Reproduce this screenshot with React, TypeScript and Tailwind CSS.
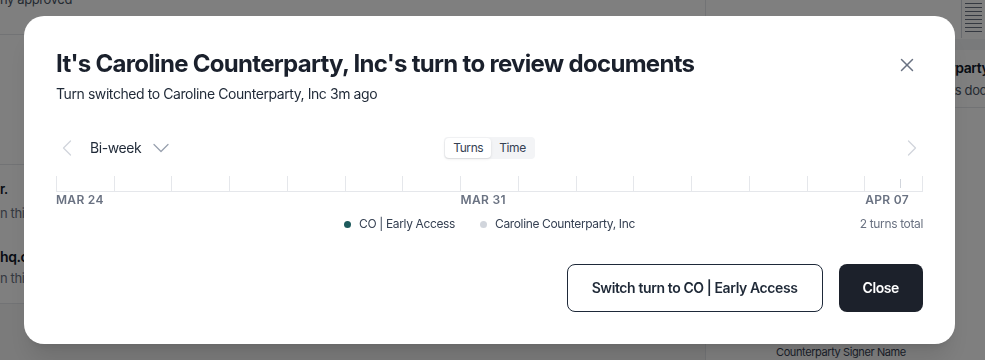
import { ChevronDown, ChevronLeft, ChevronRight, X } from "lucide-react";

// 15 day intervals on the bi-week strip, labels on every 7th tick
const days = Array.from({ length: 15 }, (_, i) => i);

const Backdrop = () => {
  return (
    <div className="flex h-[360px] w-full">
      {/* main column behind the dialog */}
      <main className="flex w-[705px] shrink-0 flex-col bg-[#f7f7f7]">
        <div className="h-[35px] border-b border-gray-200 bg-white">
          <p className="-mt-[10px] text-[13px] text-gray-600">ny approved</p>
        </div>
        <div className="h-[130px] border-b border-gray-200 bg-white" />
        <div className="flex h-[139px] flex-col border-b border-gray-200 bg-white pt-[15px]">
          <p className="text-[13px] font-semibold text-gray-900">r.</p>
          <p className="mt-[4px] text-[13px] text-gray-500">n this</p>
          <p className="mt-[23px] text-[14px] font-semibold text-gray-900">hq.com</p>
          <p className="mt-[2px] text-[13px] text-gray-500">n this</p>
        </div>
      </main>

      {/* right side panel */}
      <aside className="flex min-w-0 flex-1 flex-col overflow-hidden border-l border-gray-200 bg-white">
        <div className="flex h-[45px] justify-end">
          <div className="flex h-[38px] w-[24px] flex-col gap-[3px] border-l border-gray-300 px-[3px] pt-[3px]">
            {Array.from({ length: 8 }, (_, i) => (
              <div key={i} className="h-px bg-gray-500" />
            ))}
          </div>
        </div>
        <div className="h-[12px] bg-gray-100" />
        <div className="border-b border-gray-200 pb-[6px] pt-[7px]">
          <p className="whitespace-nowrap pl-[141px] text-[14px] font-semibold text-gray-900">Caroline Counterparty</p>
          <p className="mt-[3px] whitespace-nowrap pl-[180px] text-[13px] text-gray-600">Reviewing its documents</p>
        </div>
        <p className="ml-[70px] mt-[236px] whitespace-nowrap text-[11px] text-gray-700">Counterparty Signer Name</p>
      </aside>
    </div>
  );
};

export default function App() {
  return (
    <div className="relative h-[360px] w-full overflow-hidden font-['Inter','Liberation_Sans',sans-serif] tracking-[-0.025em]">
      <Backdrop />

      {/* overlay */}
      <div className="fixed inset-0 bg-black/50" />

      {/* dialog */}
      <div className="fixed left-6 top-4 w-[931px] rounded-[20px] bg-white px-8 pb-8 pt-8 shadow-xl">
        <button className="absolute right-[37px] top-[38px] text-gray-500">
          <X size={22} strokeWidth={1.6} />
        </button>

        <h2 className="text-2xl font-bold tracking-[-0.029em] text-[#1a202c]">
          It's Caroline Counterparty, Inc's turn to review documents
        </h2>
        <p className="mt-1 text-sm tracking-[-0.03em] text-[#1f2937]">
          Turn switched to Caroline Counterparty, Inc 3m ago
        </p>

        {/* period controls */}
        <div className="mt-[30px] grid h-[22px] grid-cols-[1fr_auto_1fr] items-center">
          <div className="flex items-center">
            <ChevronLeft size={28} strokeWidth={1.1} className="-ml-[3px] text-gray-300" />
            <span className="ml-[9px] text-sm text-[#1f2937]">Bi-week</span>
            <ChevronDown size={28} strokeWidth={1.1} className="ml-[6px] text-gray-400" />
          </div>
          <div className="flex rounded bg-gray-100 p-px text-xs text-gray-700">
            <span className="rounded bg-white px-2 py-[2px] shadow-sm">Turns</span>
            <span className="px-2 py-[2px]">Time</span>
          </div>
          <div className="flex justify-end">
            <ChevronRight size={28} strokeWidth={1.1} className="-mr-[3px] text-gray-300" />
          </div>
        </div>

        {/* timeline */}
        <div className="relative mt-[20px] flex h-[16px] border-b border-r border-gray-200">
          {days.map((d) => (
            <div key={d} className="flex-1 border-l border-gray-200" />
          ))}
          <div className="absolute left-[844px] top-[3px] h-[9px] w-px bg-gray-300" />
        </div>
        <div className="grid grid-cols-15 text-xs font-semibold tracking-wide text-gray-500">
          <span className="col-start-1 whitespace-nowrap">MAR 24</span>
          <span className="col-start-8 whitespace-nowrap">MAR 31</span>
          <span className="col-start-15 whitespace-nowrap">APR 07</span>
        </div>

        {/* legend */}
        <div className="mt-2 grid grid-cols-[1fr_auto_1fr] items-center text-xs tracking-[-0.03em]">
          <div />
          <div className="flex items-center gap-[25px] text-gray-700">
            <div className="flex items-center gap-2">
              <span className="h-[7px] w-[7px] rounded-full bg-[#1d5a5c]" />
              <span>CO | Early Access</span>
            </div>
            <div className="flex items-center gap-2">
              <span className="h-[7px] w-[7px] rounded-full bg-gray-300" />
              <span>Caroline Counterparty, Inc</span>
            </div>
          </div>
          <div className="text-right text-gray-500">2 turns total</div>
        </div>

        {/* actions */}
        <div className="mt-8 flex justify-end gap-4">
          <button className="h-12 rounded-lg border border-gray-800 bg-white px-6 text-sm font-semibold text-[#1f2937]">
            Switch turn to CO | Early Access
          </button>
          <button className="h-12 rounded-lg bg-[#1c212b] px-6 text-sm font-semibold text-white">
            Close
          </button>
        </div>
      </div>
    </div>
  );
}
